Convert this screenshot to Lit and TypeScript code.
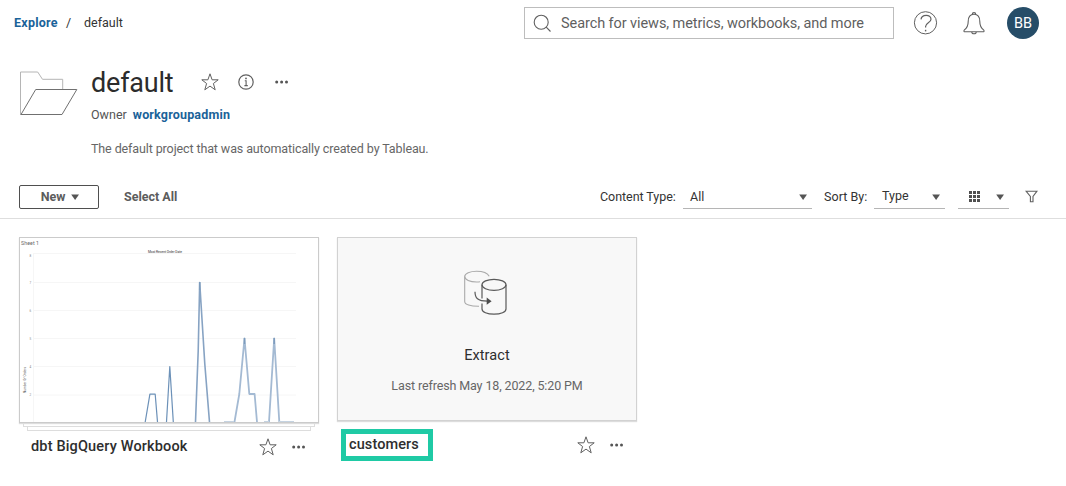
import { LitElement, html, svg, css } from "lit";
import { customElement, property } from "lit/decorators.js";

@customElement("star-icon")
class StarIcon extends LitElement {
  static styles = css`
    :host { display: block; width: 20px; height: 20px; }
    svg { display: block; }
  `;
  render() {
    return html`<svg width="20" height="20" viewBox="0 0 20 20" fill="none" stroke="#606060" stroke-width="1" stroke-linejoin="miter">
      <path d="M10 1.8 L12.1 7.8 H18.2 L13.4 11.5 L15.2 17.8 L10 14.1 L4.8 17.8 L6.6 11.5 L1.8 7.8 H7.9 Z" />
    </svg>`;
  }
}

@customElement("more-icon")
class MoreIcon extends LitElement {
  static styles = css`
    :host { display: block; width: 14px; height: 4px; }
    svg { display: block; }
  `;
  render() {
    return html`<svg width="14" height="4" viewBox="0 0 14 4" fill="#555">
      <circle cx="1.7" cy="1.9" r="1.5" /><circle cx="6.6" cy="1.9" r="1.5" /><circle cx="11.5" cy="1.9" r="1.5" />
    </svg>`;
  }
}

@customElement("caret-icon")
class CaretIcon extends LitElement {
  static styles = css`
    :host { display: block; width: 8px; height: 6px; }
    svg { display: block; }
  `;
  render() {
    return html`<svg width="8" height="6" viewBox="0 0 8 6"><path d="M0.2 0.5 H8 L4.1 5.9 Z" fill="#555" /></svg>`;
  }
}

@customElement("sheet-preview")
class SheetPreview extends LitElement {
  static styles = css`
    :host { display: block; }
    svg { display: block; font-family: Roboto, "Liberation Sans", sans-serif; }
  `;
  private ticks = [
    { y: 15, label: "8" },
    { y: 44, label: "7" },
    { y: 72, label: "6" },
    { y: 100, label: "5" },
    { y: 128, label: "4" },
    { y: 156.5, label: "2" },
  ];
  render() {
    return html`<svg width="298" height="184" viewBox="0 0 298 184">
      <g stroke="#f6f6f6" stroke-width="1">
        <path d="M13.5 15 V184" />
        ${this.ticks.map((t) => svg`<path d="M13 ${t.y + 0.5} H276" />`)}
      </g>
      <text x="1" y="7" font-size="5.2" fill="#666" textLength="18">Sheet 1</text>
      <text x="128" y="14.6" font-size="3.3" fill="#333" textLength="34">Most Recent Order Date</text>
      ${this.ticks.map((t, i) => svg`<text x="9.6" y=${t.y + (i ? 1.5 : 4)} font-size="3" fill="#888">${t.label}</text>`)}
      <text transform="translate(5.8 155) rotate(-90)" font-size="3" fill="#555" textLength="26">Number Of Orders</text>
      <g fill="none" stroke-linejoin="round">
        <path d="M125.2 184 L129.9 156.2 H135.2 L137.5 184 M146.5 184 L149.8 128.5 L153.3 184" stroke="#6c91b8" stroke-width="1.2" />
        <path d="M175.5 184 L178.2 113 L179.7 44.5 L184.8 126 L189.5 184" stroke="#87a3c3" stroke-width="1.6" />
        <path d="M214.5 184 L219.3 156 L224.5 100.5 L229.3 156 H234.6 L237 184 M249 184 L254.2 100.5 L259.3 184" stroke="#a4bad3" stroke-width="1.8" />
        <path d="M204 183.5 H214 M244 183.5 H249 M259 183.5 H274" stroke="#c5d3e1" stroke-width="1" />
        <path d="M179.7 44 V52 M224.5 100 V106 M254.2 100 V106" stroke="#7c9bbd" stroke-width="1.5" />
      </g>
    </svg>`;
  }
}

@customElement("content-card")
class ContentCard extends LitElement {
  @property() heading = "";
  @property() kind = "";
  static styles = css`
    :host { display: block; width: 300px; color: #2e2e2e; font-family: Roboto, "Liberation Sans", sans-serif; }
    .frame { box-sizing: border-box; width: 300px; height: 186px; border: 1px solid #cbcbcb; background: #fff; overflow: hidden; box-shadow: 0 1px 1px #ddd; }
    .extract { height: 184px; background: #f8f8f8; display: flex; flex-direction: column; align-items: center; border-color: #d2d2d2; }
    .layer { box-sizing: border-box; height: 4px; border: 1px solid #ddd; border-top: 0; }
    .first { margin: 0 4px; }
    .second { margin: 0 8px; }
    .cylinders { display: block; margin: 31px 4px 0 0; }
    .type { margin-top: 31px; font-size: 14.5px; line-height: 20px; letter-spacing: 0.1px; white-space: nowrap; }
    .refresh { margin-top: 11px; font-size: 12.5px; line-height: 18px; color: #666; letter-spacing: -0.12px; white-space: nowrap; }
    .foot { display: flex; align-items: flex-start; padding-left: 12px; }
    .stacked { padding-top: 5px; }
    .plain { padding: 8px 0 0 4px; }
    .name { flex: 1; font-size: 14.5px; line-height: 22px; font-weight: 500; white-space: nowrap; }
    .tight { letter-spacing: 0.16px; }
    .mark { box-sizing: border-box; width: 92px; height: 32px; border: 5px solid #1fcaa5; padding: 0 0 0 3px; line-height: 21px; font-size: 14.5px; font-weight: 500; letter-spacing: 0.1px; white-space: nowrap; }
    .grow { flex: 1; }
    star-icon { margin: 1px 14px 0 0; }
    more-icon { margin: 9px 13px 0 0; }
    .plain star-icon { margin-top: 6px; }
    .plain more-icon { margin-top: 14px; }
  `;
  render() {
    if (this.kind === "workbook") {
      return html`
        <div class="frame"><sheet-preview></sheet-preview></div>
        <div class="layer first"></div>
        <div class="layer second"></div>
        <div class="foot stacked">
          <div class="name tight">${this.heading}</div>
          <star-icon></star-icon><more-icon></more-icon>
        </div>`;
    }
    return html`
      <div class="frame extract">
        <svg class="cylinders" width="44" height="46" viewBox="0 0 44 46" fill="none" stroke-width="1.1">
          <g stroke="#aaa">
            <path d="M26.2 7.2 C24.5 3.8 19.5 2.2 13.5 2.2 C7 2.2 1.7 4.4 1.7 7.6 C1.7 10.8 7 13 13.5 13 C15 13 16 12.9 17 12.7" />
            <path d="M1.7 7.6 V32.4 C1.7 35.5 7.5 37.4 16 37.3" />
          </g>
          <g stroke="#5a5a5a" stroke-width="1.2">
            <ellipse cx="31" cy="15.8" rx="12" ry="5.5" />
            <path d="M43 15.8 V40 C43 43 37.8 45.2 31 45.2 C24.2 45.2 19 43 19 40 V34.5 M19 15.8 V29.5" />
            <path d="M12 22.8 C12 29 14.5 32.2 24.5 32.2" />
          </g>
          <path d="M23.7 28.6 L28.6 32.2 L23.7 35.8 Z" fill="#4c4c4c" />
        </svg>
        <div class="type">Extract</div>
        <div class="refresh">Last refresh May 18, 2022, 5:20 PM</div>
      </div>
      <div class="foot plain">
        <div class="mark">${this.heading}</div>
        <div class="grow"></div>
        <star-icon></star-icon><more-icon></more-icon>
      </div>`;
  }
}

@customElement("app-root")
class AppRoot extends LitElement {
  static styles = css`
    :host { display: block; width: 1066px; height: 486px; overflow: hidden; background: #fff; color: #333; font-family: Roboto, "Liberation Sans", sans-serif; font-size: 12.5px; }
    div, span { white-space: nowrap; }
    svg { display: block; flex: none; }
    .top { display: flex; align-items: center; height: 46px; padding-left: 14px; box-sizing: border-box; }
    .crumbs { display: flex; width: 510px; flex: none; line-height: 14px; }
    .explore { width: 52px; color: #1a6299; font-weight: 700; letter-spacing: 0.25px; }
    .slash { width: 18px; }
    .search { box-sizing: border-box; width: 370px; height: 32px; border: 1px solid #bdbdbd; display: flex; align-items: center; padding-left: 8px; font-size: 14.5px; color: #5f5f5f; flex: none; }
    .query { margin-left: 9px; letter-spacing: -0.08px; }
    .help { margin-left: 19px; }
    .bell { margin-left: 24px; }
    .avatar { margin-left: 22px; width: 32px; height: 32px; border-radius: 50%; background: #264d68; color: #fff; display: flex; align-items: center; justify-content: center; font-size: 14.5px; }
    .project { display: flex; padding: 19px 0 0 19px; height: 139px; box-sizing: border-box; }
    .folder { margin: 5px 13px 0 0; }
    .titles { display: flex; align-items: center; height: 34px; }
    .title { width: 109px; font-size: 27px; line-height: 34px; padding-top: 1px; color: #2c2c2c; letter-spacing: -0.2px; }
    .info { margin: 0 21px 0 18px; }
    .owner { display: flex; gap: 6px; margin-top: 7px; line-height: 18px; color: #555; }
    .admin { color: #1a6299; font-weight: 700; letter-spacing: 0.18px; }
    .about { margin-top: 16px; line-height: 18px; color: #666; letter-spacing: -0.11px; }
    .bar { box-sizing: border-box; height: 34px; border-bottom: 1px solid #dedede; display: flex; padding-left: 19px; line-height: 24px; }
    .new { box-sizing: border-box; width: 80px; height: 24px; border: 1px solid #4f4f4f; border-radius: 2px; display: flex; align-items: center; justify-content: center; gap: 6px; padding-left: 2px; font-weight: 700; color: #5c5c5c; line-height: 22px; }
    .all { margin-left: 25px; width: 476px; font-weight: 700; color: #5c5c5c; }
    .label { width: 83px; letter-spacing: -0.05px; }
    .sort { width: 50px; margin-left: 12px; letter-spacing: 0.05px; }
    .select { box-sizing: border-box; height: 24px; border-bottom: 1px solid #b5b5b5; display: flex; align-items: center; justify-content: space-between; padding: 0 5px 0 7px; line-height: 24px; }
    .types { width: 129px; }
    .order { width: 71px; padding-left: 8px; line-height: 22px; align-items: flex-start; }
    .order caret-icon { margin-top: 9px; }
    .view { width: 51px; margin-left: 13px; padding-left: 11px; }
    .funnel { margin: 5px 0 0 16px; }
    .cards { display: flex; gap: 18px; padding: 18px 0 0 19px; }
  `;
  render() {
    return html`
      <div class="top">
        <div class="crumbs"><span class="explore">Explore</span><span class="slash">/</span><span>default</span></div>
        <div class="search">
          <svg width="19" height="19" viewBox="0 0 19 19" fill="none" stroke="#606060" stroke-width="1.1"><circle cx="8.2" cy="8.2" r="7" /><path d="M13.2 13.2 L17.5 17.5" /></svg>
          <span class="query">Search for views, metrics, workbooks, and more</span>
        </div>
        <svg class="help" width="25" height="25" viewBox="0 0 25 25" fill="none" stroke="#606060" stroke-width="1">
          <circle cx="12.5" cy="11.8" r="11.1" />
          <path d="M8 8.4 C8.6 3 18 3 18 8.2 C18 11.8 12.6 11.8 12.6 15.5 V16.6" stroke-width="1.2" />
          <path d="M12.6 18.8 V20.4" stroke-width="1.4" />
        </svg>
        <svg class="bell" width="23" height="25" viewBox="0 0 23 25" fill="none" stroke="#606060" stroke-width="1.1">
          <path d="M2.4 20.7 C1.8 20.7 1.8 19.4 2.4 18.9 C5 17 6.2 15 6.2 10.5 C6.2 5.8 8.4 3.2 12 3.2 C15.6 3.2 17.8 5.8 17.8 10.5 C17.8 15 19 17 21.6 18.9 C22.2 19.4 22.2 20.7 21.6 20.7 Z" />
          <path d="M10.3 3.3 C10.3 1.1 13.7 1.1 13.7 3.3 M9.8 21 C9.8 23.3 14.2 23.3 14.2 21" />
        </svg>
        <div class="avatar">BB</div>
      </div>
      <div class="project">
        <svg class="folder" width="59" height="47" viewBox="0 0 59 47" fill="none">
          <path d="M1.5 45 V2 H18.7 L23.5 9.3 H43.7 V19" stroke="#b5b5b5" />
          <path d="M16.7 19.5 H57.8 L43 44.5 H2 Z" stroke="#707070" stroke-width="1" />
        </svg>
        <div>
          <div class="titles">
            <div class="title">default</div>
            <star-icon></star-icon>
            <svg class="info" width="16" height="16" viewBox="0 0 16 16" fill="none" stroke="#606060" stroke-width="1.2"><circle cx="8" cy="8" r="7.2" /><path d="M6.8 6.7 H8.1 V11.5 M6.4 11.6 H9.8" stroke-width="1.1" /><circle cx="8" cy="4.4" r="0.9" fill="#606060" stroke="none" /></svg>
            <more-icon></more-icon>
          </div>
          <div class="owner"><span>Owner</span><span class="admin">workgroupadmin</span></div>
          <div class="about">The default project that was automatically created by Tableau.</div>
        </div>
      </div>
      <div class="bar">
        <div class="new">New<caret-icon></caret-icon></div>
        <div class="all">Select All</div>
        <div class="label">Content Type:</div>
        <div class="select types">All<caret-icon></caret-icon></div>
        <div class="label sort">Sort By:</div>
        <div class="select order">Type<caret-icon></caret-icon></div>
        <div class="select view">
          <svg width="11" height="11" viewBox="0 0 11 11" fill="#4f4f4f"><path d="M0 0h3v3H0zM4 0h3v3H4zM8 0h3v3H8zM0 4h3v3H0zM4 4h3v3H4zM8 4h3v3H8zM0 8h3v3H0zM4 8h3v3H4zM8 8h3v3H8z" /></svg>
          <caret-icon></caret-icon>
        </div>
        <svg class="funnel" width="13" height="13" viewBox="0 0 13 13" fill="none" stroke="#606060" stroke-width="1.1"><path d="M1 1.2 H12 L8 6.4 V11.7 H5.4 V6.4 Z" /></svg>
      </div>
      <div class="cards">
        <content-card kind="workbook" heading="dbt BigQuery Workbook"></content-card>
        <content-card kind="extract" heading="customers"></content-card>
      </div>`;
  }
}
